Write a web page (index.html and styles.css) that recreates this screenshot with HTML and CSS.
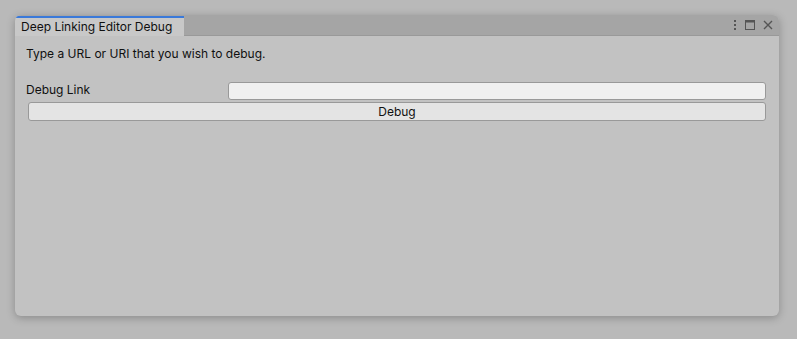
FILE: index.html
```html
<!DOCTYPE html>
<html lang="en">

<head>
    <meta charset="UTF-8">
    <meta name="viewport" content="width=device-width, initial-scale=1.0">
    <title>Deep Linking Editor Debug</title>
    <link rel="stylesheet" href="styles.css">
</head>

<body>
    <div class="window">
        <div class="tab-bar">
            <div class="tab">Deep Linking Editor Debug</div>
            <div class="tab-actions">
                <svg class="icon" width="6" height="14" viewBox="0 0 6 14">
                    <rect x="2" y="2" width="2" height="2" fill="#555"/>
                    <rect x="2" y="6" width="2" height="2" fill="#555"/>
                    <rect x="2" y="10" width="2" height="2" fill="#555"/>
                </svg>
                <svg class="icon" width="12" height="12" viewBox="0 0 12 12">
                    <rect x="1.5" y="1.5" width="9" height="9" fill="none" stroke="#555"/>
                    <rect x="1" y="1" width="10" height="2.5" fill="#555"/>
                </svg>
                <svg class="icon" width="12" height="12" viewBox="0 0 12 12">
                    <path d="M2 2 L10 10 M10 2 L2 10" stroke="#555" stroke-width="1.4"/>
                </svg>
            </div>
        </div>

        <div class="content">
            <p class="hint">Type a URL or URI that you wish to debug.</p>

            <div class="field-row">
                <label class="field-label" for="debugLink">Debug Link</label>
                <input class="text-field" id="debugLink" type="text">
            </div>

            <button class="button">Debug</button>
        </div>
    </div>
</body>

</html>
```

FILE: styles.css
```css
body {
    margin: 0;
    padding: 15px 18px 23px 15px;
    background-color: #b9b9b9;
    font-family: Inter, 'Noto Sans', sans-serif;
    font-size: 12px;
    color: #101010;
}

.window {
    height: 301px;
    background-color: #c2c2c2;
    border-radius: 6px;
    box-shadow: 0 2px 8px rgba(0, 0, 0, 0.25);
    overflow: hidden;
    display: flex;
    flex-direction: column;
}

.tab-bar {
    height: 20px;
    background-color: #a5a5a5;
    border-bottom: 1px solid #999;
    display: flex;
    justify-content: space-between;
    align-items: flex-end;
}

.tab {
    width: 163px;
    height: 18px;
    margin-bottom: -1px;
    padding-left: 6px;
    background-color: #c8c8c8;
    border-top: 2px solid #3a79d9;
    line-height: 18px;
}

.tab-actions {
    display: flex;
    align-items: center;
    gap: 6px;
    height: 20px;
    padding-right: 5px;
}

.icon {
    display: block;
}

.content {
    padding: 10px 13px 0 13px;
}

.hint {
    margin: 0 0 0 -2px;
    line-height: 16px;
}

.field-row {
    display: flex;
    align-items: center;
    margin-top: 20px;
}

.field-label {
    width: 202px;
    margin: -3px 0 0 -2px;
    line-height: 16px;
}

.text-field {
    flex: 1;
    height: 18px;
    box-sizing: border-box;
    margin: 0;
    border: 1px solid #999;
    border-radius: 3px;
    background-color: #f0f0f0;
    font: inherit;
}

.button {
    display: block;
    width: 100%;
    height: 19px;
    margin-top: 2px;
    border: 1px solid #999;
    border-radius: 3px;
    background-color: #e4e4e4;
    font: inherit;
    color: #101010;
    padding: 0;
}
```
